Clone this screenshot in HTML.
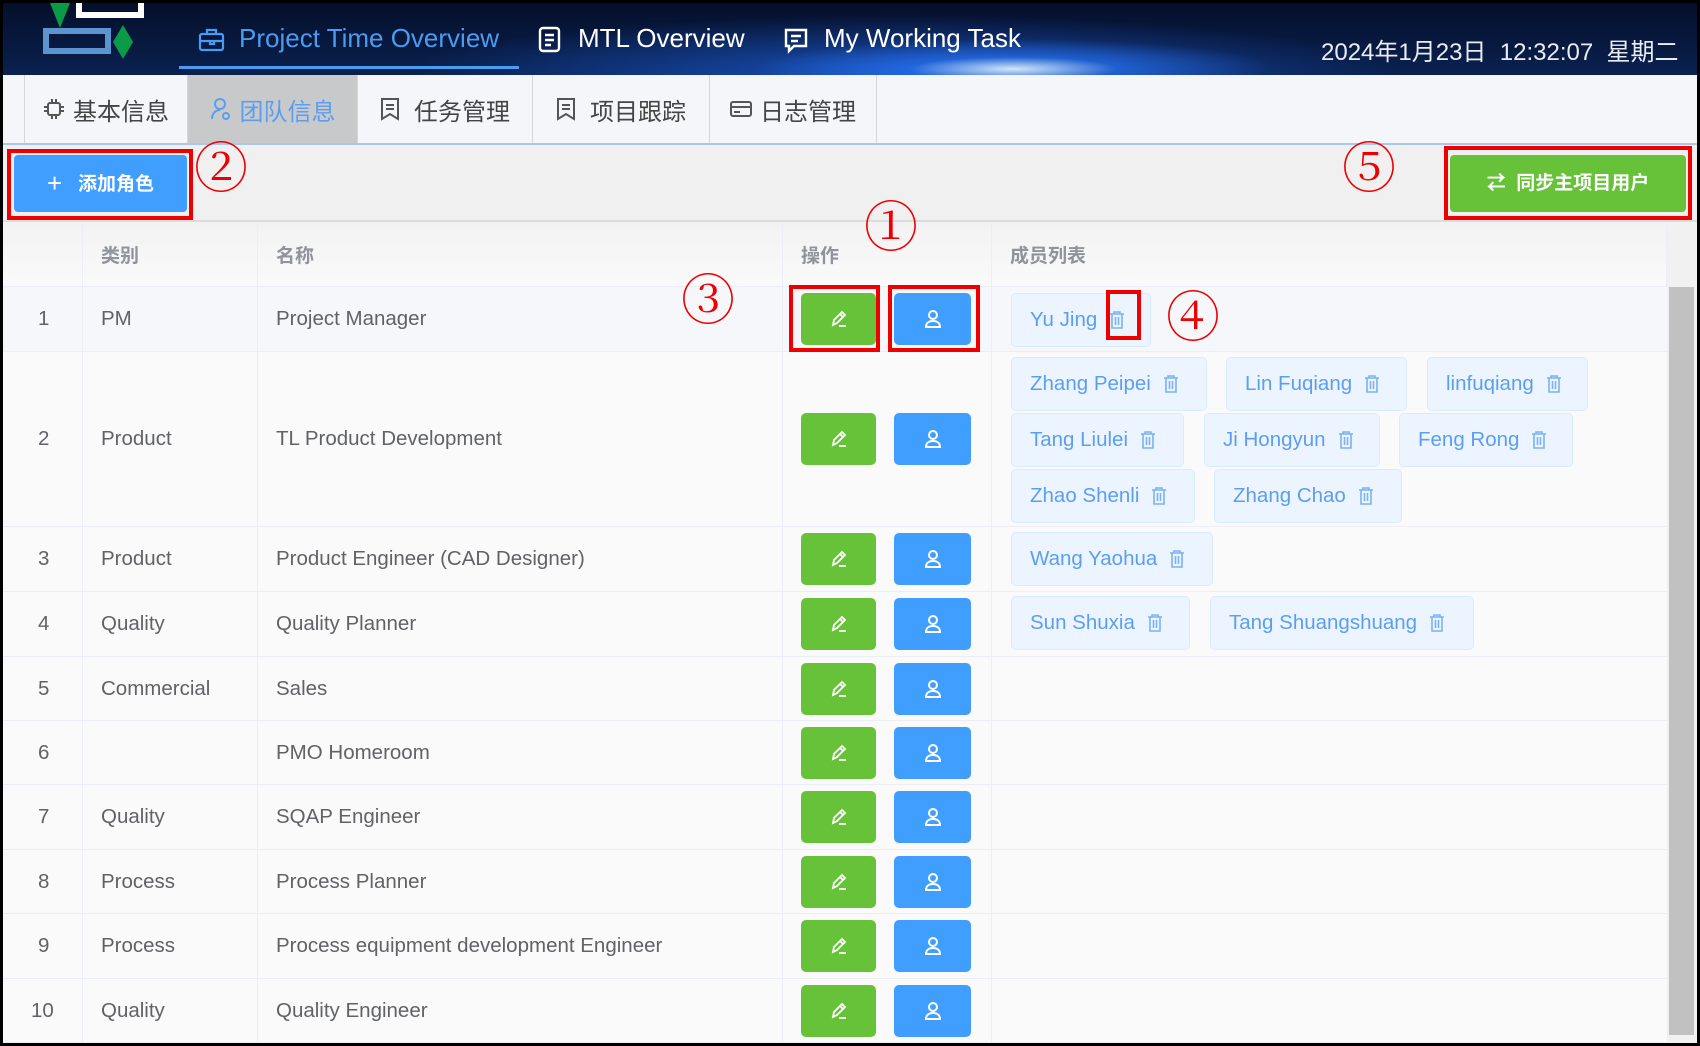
<!DOCTYPE html>
<html><head><meta charset="utf-8"><style>
*{margin:0;padding:0;box-sizing:border-box}
body{width:1700px;height:1046px;overflow:hidden;background:#000;font-family:"Liberation Sans","Noto Sans CJK SC",sans-serif;position:relative}
.abs{position:absolute}
#hdr{left:3px;top:3px;width:1694px;height:72px;background:radial-gradient(ellipse 260px 30px at 1010px 66px,rgba(220,240,255,.95),rgba(40,120,255,.6) 40%,rgba(0,0,0,0) 100%),radial-gradient(ellipse 500px 60px at 900px 72px,rgba(30,100,230,.7),rgba(0,0,0,0)),linear-gradient(180deg,#050f2a,#0a2150);overflow:hidden}
.nav{color:#fff;font-size:26px;top:20px;white-space:nowrap}
#tabs{left:3px;top:75px;width:1694px;height:70px;background:#f4f6fa;border-bottom:2px solid #a9c8ee}
.tab{top:0;height:68px;font-size:24px;color:#444;border-right:1px solid #d6d6d6;display:flex;align-items:center;justify-content:center;gap:8px}
#tool{left:3px;top:145px;width:1694px;height:77px;background:#f0f0f0;border-bottom:2px solid #dcdcdc}
.btn{color:#fff;font-size:19px;border-radius:4px;text-align:center;font-weight:bold}
.red{border:4px solid #e00;}
.circ{color:#e00;font-family:"Liberation Serif","Noto Serif CJK SC",serif;font-size:54px;line-height:54px}
#tbl{left:3px;top:222px;width:1664px;height:821px;background:#fafafa}
.row{left:0;width:1664px;border-bottom:1px solid #ebeef5}
.cell{top:0;height:100%;display:flex;align-items:center;font-size:20.5px;color:#606266;border-right:1px solid #ebeef5}
.g{background:#67c23a;width:75px;height:52px;border-radius:5px}
.b{background:#409eff;width:77px;height:52px;border-radius:5px}
.tag{height:54px;background:#ecf5ff;border:1.5px solid #d9ecff;border-radius:5px;color:#5b9ef0;font-size:20.5px;display:flex;align-items:center;padding-left:18px;white-space:nowrap}
.tag svg{margin-left:12px}
</style></head><body>
<div id="hdr" class="abs">
<svg class="abs" style="left:40px;top:-3px" width="110" height="62"><polygon points="7,3 27,3 17,28" fill="#0a9a48"/><rect x="36" y="0" width="62" height="15" fill="none" stroke="#fff" stroke-width="6"/><rect x="3" y="31" width="62" height="20" fill="none" stroke="#5d93cf" stroke-width="6"/><polygon points="80,25 90,42 80,59 70,42" fill="#0a9a48"/></svg>
<svg class="abs" style="left:195px;top:24px" width="28" height="26" fill="none" stroke="#4a9cf0" stroke-width="2.2"><rect x="2" y="7" width="23" height="16" rx="2"/><path d="M9 7V3h9v4M2 14h23M12 14v3h4v-3"/></svg>
<div class="abs nav" style="left:236px;color:#4a9cf0">Project Time Overview</div>
<div class="abs" style="left:176px;top:63px;width:340px;height:3px;background:#4a9cf0"></div>
<svg class="abs" style="left:535px;top:23px" width="24" height="28" fill="none" stroke="#fff" stroke-width="2.4"><rect x="2" y="2" width="19" height="23" rx="3"/><path d="M7 9h9M7 14h9M7 19h6"/></svg>
<div class="abs nav" style="left:575px">MTL Overview</div>
<svg class="abs" style="left:780px;top:24px" width="26" height="28" fill="none" stroke="#fff" stroke-width="2.4"><path d="M3 3h20v16H11l-5 5v-5H3z"/><path d="M8 9h10M8 14h7"/></svg>
<div class="abs nav" style="left:821px">My Working Task</div>
<div class="abs" style="left:1318px;top:29px;color:#e8ecf4;font-size:24px;white-space:nowrap">2024年1月23日&nbsp; 12:32:07&nbsp; 星期二</div>
</div>
<div id="tabs" class="abs">
<div class="abs tab" style="left:21px;width:164px;border-left:1px solid #d6d6d6"><svg width="22" height="22" fill="none" stroke="#555" stroke-width="2"><rect x="5" y="5" width="12" height="12" rx="2"/><path d="M9 1v4M13 1v4M9 17v4M13 17v4M1 9h4M1 13h4M17 9h4M17 13h4"/></svg>基本信息</div>
<div class="abs tab" style="left:185px;width:170px;background:#c8c9cb;color:#5b9ef0"><svg width="22" height="24" fill="none" stroke="#5b9ef0" stroke-width="2"><circle cx="10" cy="7" r="5"/><path d="M2 22c0-6 4-9 8-9"/><circle cx="16" cy="19" r="3"/></svg>团队信息</div>
<div class="abs tab" style="left:355px;width:175px;gap:14px"><svg width="20" height="24" fill="none" stroke="#555" stroke-width="2"><path d="M2 2h16v20l-8-5-8 5zM6 8h8M6 12h8"/></svg>任务管理</div>
<div class="abs tab" style="left:530px;width:177px;gap:14px"><svg width="20" height="24" fill="none" stroke="#555" stroke-width="2"><path d="M2 2h16v20l-8-5-8 5zM6 8h8M6 12h8"/></svg>项目跟踪</div>
<div class="abs tab" style="left:707px;width:167px"><svg width="22" height="20" fill="none" stroke="#555" stroke-width="2"><rect x="1" y="3" width="20" height="14" rx="2"/><path d="M1 8h20M4 13h6"/></svg>日志管理</div>
</div>
<div id="tool" class="abs">
<div class="abs btn" style="left:11px;top:10px;width:173px;height:57px;line-height:57px;background:#409eff"><span style="font-size:26px;font-weight:normal;vertical-align:-2px">+</span>&nbsp;&nbsp; 添加角色</div>
<div class="abs btn" style="left:1447px;top:10px;width:236px;height:57px;line-height:57px;background:#67c23a">⇄&nbsp; 同步主项目用户</div>
</div>
<div class="abs red" style="left:7px;top:149px;width:186px;height:71px"></div>
<div class="abs red" style="left:1444px;top:146px;width:248px;height:74px"></div>
<div id="tbl" class="abs">
<div class="abs row" style="top:0;height:65px;background:linear-gradient(#f2f2f3,#fafafa)">
<div class="abs cell" style="left:0;width:80px"></div>
<div class="abs cell" style="left:80px;width:175px;padding-left:18px;color:#909399;font-weight:bold;font-size:19px">类别</div>
<div class="abs cell" style="left:255px;width:525px;padding-left:18px;color:#909399;font-weight:bold;font-size:19px">名称</div>
<div class="abs cell" style="left:780px;width:209px;padding-left:18px;color:#909399;font-weight:bold;font-size:19px">操作</div>
<div class="abs cell" style="left:989px;width:675px;padding-left:18px;color:#909399;font-weight:bold;font-size:19px">成员列表</div>
</div>
</div>
<div class="abs" style="left:1667px;top:222px;width:30px;height:821px;background:#f1f1f1"></div>
<div class="abs" style="left:1669px;top:287px;width:25px;height:748px;background:#c1c1c1"></div>
<div id="rows"></div>
<script>
var rows=[["1","PM","Project Manager",287,65],["2","Product","TL Product Development",352,175],["3","Product","Product Engineer (CAD Designer)",527,65],["4","Quality","Quality Planner",592,65],["5","Commercial","Sales",657,64],["6","","PMO Homeroom",721,64],["7","Quality","SQAP Engineer",785,65],["8","Process","Process Planner",850,64],["9","Process","Process equipment development Engineer",914,65],["10","Quality","Quality Engineer",979,64]];
var pen='<svg width="22" height="22" viewBox="0 0 22 22" fill="none" stroke="#fff" stroke-width="1.8"><path d="M5 17l1-5 8-8 3 3-8 8z M12 6l3 3 M11 18h7"/></svg>';
var usr='<svg width="22" height="22" viewBox="0 0 22 22" fill="none" stroke="#fff" stroke-width="2"><circle cx="11" cy="7" r="4"/><path d="M4 19c0-4 3-6 7-6s7 2 7 6z"/></svg>';
var tr='<svg width="16" height="20" viewBox="0 0 16 20" fill="none" stroke="#7ab2f2" stroke-width="1.6"><path d="M1 4h14M5 4V2h6v2M3 4v14h10V4M6.5 7v8M9.5 7v8"/></svg>';
var h='';
rows.forEach(function(r,i){
 var bg=i==0?'#f5f7fa':'#fafafa';
 h+='<div class="abs row" style="left:3px;top:'+r[3]+'px;height:'+r[4]+'px;background:'+bg+'">'+
 '<div class="abs cell" style="left:0;width:80px;padding-left:'+(r[0].length>1?28:35)+'px">'+r[0]+'</div>'+
 '<div class="abs cell" style="left:80px;width:175px;padding-left:18px">'+r[1]+'</div>'+
 '<div class="abs cell" style="left:255px;width:525px;padding-left:18px">'+r[2]+'</div>'+
 '<div class="abs cell" style="left:780px;width:209px;padding-left:18px"><div class="g" style="display:flex;align-items:center;justify-content:center">'+pen+'</div><div class="b" style="margin-left:18px;display:flex;align-items:center;justify-content:center">'+usr+'</div></div>'+
 '<div class="abs cell" style="left:989px;width:675px;border-right:none"></div></div>';
});
var tags=[["Yu Jing",1011,293,140],["Zhang Peipei",1011,357,196],["Lin Fuqiang",1226,357,181],["linfuqiang",1427,357,161],["Tang Liulei",1011,413,173],["Ji Hongyun",1204,413,176],["Feng Rong",1399,413,174],["Zhao Shenli",1011,469,184],["Zhang Chao",1214,469,188],["Wang Yaohua",1011,532,202],["Sun Shuxia",1011,596,179],["Tang Shuangshuang",1210,596,264]];
tags.forEach(function(t){h+='<div class="abs tag" style="left:'+t[1]+'px;top:'+t[2]+'px;width:'+t[3]+'px">'+t[0]+tr+'</div>';});
document.getElementById('rows').innerHTML=h;
</script>
<div class="abs red" style="left:789px;top:285px;width:91px;height:67px"></div>
<div class="abs red" style="left:888px;top:285px;width:92px;height:67px"></div>
<div class="abs red" style="left:1106px;top:290px;width:35px;height:50px"></div>
<div class="abs circ" style="left:194px;top:142px">②</div>
<div class="abs circ" style="left:1342px;top:142px">⑤</div>
<div class="abs circ" style="left:864px;top:201px">①</div>
<div class="abs circ" style="left:681px;top:274px">③</div>
<div class="abs circ" style="left:1166px;top:291px">④</div>
</body></html>
